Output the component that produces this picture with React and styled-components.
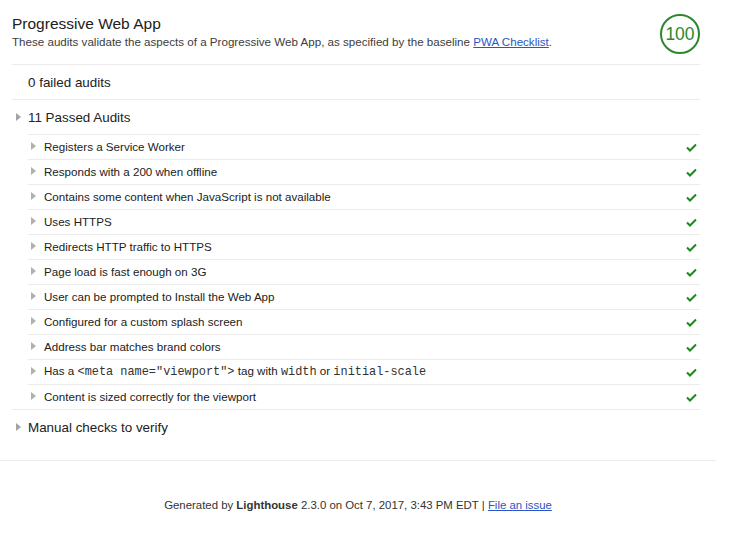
import styled, { createGlobalStyle } from "styled-components";

const GlobalStyle = createGlobalStyle`
  body {
    margin: 0;
    background: #fff;
    font-family: "Liberation Sans", Arial, sans-serif;
    color: #212121;
  }
`;

const Page = styled.div`
  width: 716px;
`;

const Category = styled.section`
  padding: 0 16px 16px 12px;
  border-bottom: 1px solid #ebebeb;
`;

const Header = styled.header`
  display: flex;
  justify-content: space-between;
  align-items: flex-start;
  padding: 14px 0 10px;
`;

const Title = styled.h2`
  margin: 0;
  font-size: 15.5px;
  font-weight: normal;
  line-height: 20px;
  color: #212121;
`;

const Description = styled.p`
  margin: 0;
  font-size: 11.6px;
  line-height: 16px;
  color: #3c3c3c;
`;

const Link = styled.a`
  color: #2a56c6;
  text-decoration: underline;
`;

const Score = styled.div`
  width: 36px;
  height: 36px;
  border: 2px solid #2b882f;
  border-radius: 50%;
  display: flex;
  align-items: center;
  justify-content: center;
  font-size: 17.5px;
  color: #2b882f;
`;

const Group = styled.div`
  border-top: 1px solid #ebebeb;
`;

const GroupTitle = styled.div`
  display: flex;
  align-items: center;
  height: 34px;
  padding-left: ${(p) => (p.$expandable ? "4px" : "16px")};
  gap: 7px;
  font-size: 13.4px;
`;

const Marker = styled.span`
  width: 0;
  height: 0;
  border-left: 5px solid ${(p) => (p.$small ? "#b0b0b0" : "#a3a3a3")};
  border-top: 4px solid transparent;
  border-bottom: 4px solid transparent;
`;

const AuditList = styled.div`
  margin-left: 16px;
`;

const Audit = styled.div`
  display: flex;
  align-items: center;
  height: 22px;
  border-top: 1px solid #ebebeb;
  padding: 0 3px 2px 3px;
  gap: 8px;
  font-size: 11.6px;
`;

const AuditText = styled.span`
  flex: 1;
`;

const CheckBox = styled.span`
  display: flex;
  margin-top: 2px;
`;

const Code = styled.code`
  font-family: "Liberation Mono", "Courier New", monospace;
  font-size: 11.9px;
  color: #333;
`;

const Footer = styled.footer`
  padding: 36px 0 30px;
  text-align: center;
  font-size: 11.4px;
  line-height: 16px;
  color: #333;

  b {
    font-weight: bold;
  }
`;

function Check() {
  return (
    <CheckBox>
      <svg width="11" height="9" viewBox="0 0 11 9">
        <polyline points="1,4.5 4,7.5 10,1.5" fill="none" stroke="#1a8a1a" strokeWidth="2" />
      </svg>
    </CheckBox>
  );
}

const audits = [
  "Registers a Service Worker",
  "Responds with a 200 when offline",
  "Contains some content when JavaScript is not available",
  "Uses HTTPS",
  "Redirects HTTP traffic to HTTPS",
  "Page load is fast enough on 3G",
  "User can be prompted to Install the Web App",
  "Configured for a custom splash screen",
  "Address bar matches brand colors",
  "viewport",
  "Content is sized correctly for the viewport",
];

export default function App() {
  return (
    <Page>
      <GlobalStyle />
      <Category>
        <Header>
          <div>
            <Title>Progressive Web App</Title>
            <Description>
              These audits validate the aspects of a Progressive Web App, as specified by the baseline{" "}
              <Link href="#">PWA Checklist</Link>.
            </Description>
          </div>
          <Score>100</Score>
        </Header>
        <Group>
          <GroupTitle>0 failed audits</GroupTitle>
        </Group>
        <Group>
          <GroupTitle $expandable>
            <Marker />
            11 Passed Audits
          </GroupTitle>
          <AuditList>
            {audits.map((a) => (
              <Audit key={a}>
                <Marker $small />
                <AuditText>
                  {a === "viewport" ? (
                    <>
                      Has a <Code>&lt;meta name="viewport"&gt;</Code> tag with <Code>width</Code> or{" "}
                      <Code>initial-scale</Code>
                    </>
                  ) : (
                    a
                  )}
                </AuditText>
                <Check />
              </Audit>
            ))}
          </AuditList>
        </Group>
        <Group>
          <GroupTitle $expandable>
            <Marker />
            Manual checks to verify
          </GroupTitle>
        </Group>
      </Category>
      <Footer>
        Generated by <b>Lighthouse</b> 2.3.0 on Oct 7, 2017, 3:43 PM EDT | <Link href="#">File an issue</Link>
      </Footer>
    </Page>
  );
}
